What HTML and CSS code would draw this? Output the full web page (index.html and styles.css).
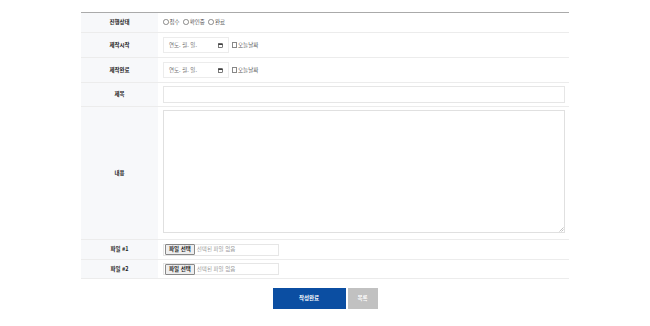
FILE: index.html
```html
<!DOCTYPE html>
<html lang="ko">
<head>
<meta charset="utf-8">
<title>작성</title>
<link rel="stylesheet" href="styles.css">
</head>
<body>
<div class="wrap">
  <table class="form">
    <tr class="r1">
      <th>진행상태</th>
      <td>
        <label class="opt"><span class="radio"></span>접수</label>
        <label class="opt"><span class="radio"></span>확인중</label>
        <label class="opt"><span class="radio"></span>완료</label>
      </td>
    </tr>
    <tr class="r2">
      <th>제작시작</th>
      <td>
        <span class="date">연도. 월. 일.
          <svg class="cal" viewBox="0 0 10 10"><rect x="1" y="1.5" width="8" height="7.5" fill="none" stroke="#222" stroke-width="1.2"/><rect x="1" y="1.5" width="8" height="2.2" fill="#222"/></svg>
        </span>
        <label class="chk"><span class="box"></span>오늘날짜</label>
      </td>
    </tr>
    <tr class="r2">
      <th>제작완료</th>
      <td>
        <span class="date">연도. 월. 일.
          <svg class="cal" viewBox="0 0 10 10"><rect x="1" y="1.5" width="8" height="7.5" fill="none" stroke="#222" stroke-width="1.2"/><rect x="1" y="1.5" width="8" height="2.2" fill="#222"/></svg>
        </span>
        <label class="chk"><span class="box"></span>오늘날짜</label>
      </td>
    </tr>
    <tr class="r3">
      <th>제목</th>
      <td><div class="text"></div></td>
    </tr>
    <tr class="r4">
      <th>내용</th>
      <td class="area-cell">
        <div class="area">
          <svg class="grip" viewBox="0 0 6 6"><path d="M5.5 1.5 L1.5 5.5 M5.5 3.5 L3.5 5.5" stroke="#999" stroke-width="0.6"/></svg>
        </div>
      </td>
    </tr>
    <tr class="r5">
      <th>파일 #1</th>
      <td><span class="file"><span class="fbtn">파일 선택</span>선택된 파일 없음</span></td>
    </tr>
    <tr class="r6">
      <th>파일 #2</th>
      <td><span class="file"><span class="fbtn">파일 선택</span>선택된 파일 없음</span></td>
    </tr>
  </table>

  <div class="btns">
    <a class="btn save">작성완료</a>
    <a class="btn list">목록</a>
  </div>
</div>
</body>
</html>
```

FILE: styles.css
```css
body {
  margin: 0;
  background: #fff;
  font-family: "Noto Sans CJK KR", "Noto Sans", sans-serif;
  font-size: 5.5px;
  line-height: 1.2;
  color: #333;
}

.wrap {
  width: 488px;
  margin: 12px auto 0;
}

.form {
  width: 100%;
  border-collapse: collapse;
  border-top: 1px solid #aaa;
}

.form th,
.form td {
  border-bottom: 1px solid #ececec;
  padding: 0;
  vertical-align: middle;
}

.form th {
  width: 77px;
  background: #f7f8fa;
  font-weight: bold;
  color: #222;
  text-align: center;
}

.form td {
  padding-left: 5px;
  padding-right: 4px;
}

.r1 { height: 20px; }
.r2 { height: 25px; }
.r3 { height: 24px; }
.r4 { height: 133px; }
.r5 { height: 20px; }
.r6 { height: 19px; }

.form .area-cell {
  vertical-align: top;
  padding-top: 3px;
}

.opt {
  display: inline-flex;
  align-items: center;
  margin-right: 2px;
  color: #555;
}

.radio {
  width: 3.5px;
  height: 3.5px;
  border: 0.6px solid #888;
  border-radius: 50%;
  margin-right: 1px;
}

.date {
  display: inline-flex;
  align-items: center;
  justify-content: space-between;
  box-sizing: border-box;
  width: 66px;
  height: 16px;
  padding: 0 5px 0 5px;
  border: 1px solid #ececec;
  color: #777;
  vertical-align: middle;
}

.cal {
  width: 5px;
  height: 5px;
}

.chk {
  display: inline-flex;
  align-items: center;
  vertical-align: middle;
  margin-left: 1px;
  color: #555;
}

.box {
  width: 3.5px;
  height: 3.5px;
  border: 0.6px solid #888;
  margin-right: 1px;
}

.text {
  box-sizing: border-box;
  height: 17px;
  border: 1px solid #e6e6e6;
}

.area {
  position: relative;
  box-sizing: border-box;
  height: 123px;
  border: 1px solid #e0e0e0;
}

.grip {
  position: absolute;
  right: 0;
  bottom: 0;
  width: 6px;
  height: 6px;
}

.file {
  display: flex;
  align-items: center;
  box-sizing: border-box;
  width: 116px;
  height: 12px;
  padding-left: 1px;
  border: 1px solid #e6e6e6;
  color: #999;
}

.fbtn {
  display: inline-block;
  height: 9px;
  line-height: 9px;
  padding: 0 3px;
  margin-right: 2px;
  background: #eee;
  border: 0.6px solid #888;
  border-radius: 1px;
  color: #222;
  font-weight: bold;
}

.btns {
  display: flex;
  justify-content: center;
  gap: 2px;
  margin-top: 9px;
}

.btn {
  display: flex;
  align-items: center;
  justify-content: center;
  height: 21px;
  color: #fff;
  font-weight: bold;
}

.save {
  width: 73px;
  background: #0b4ea2;
}

.list {
  width: 30px;
  background: #c1c1c1;
}
```
